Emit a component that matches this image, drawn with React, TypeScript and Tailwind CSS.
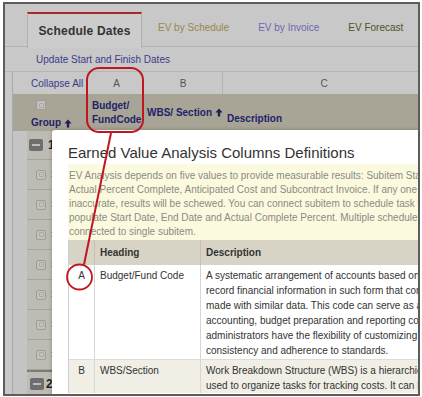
import React from 'react';

// Definitions modal over the (dimmed) schedule grid, with red call-out marks
const infoLines = [
  'EV Analysis depends on five values to provide measurable results: Subitem Start Date, End Date,',
  'Actual Percent Complete, Anticipated Cost and Subcontract Invoice. If any one of these is missing or',
  'inaccurate, results will be schewed. You can connect subitem to schedule task to automatically',
  'populate Start Date, End Date and Actual Complete Percent. Multiple schedule tasks can be',
  'connected to single subitem.',
];

const descA = [
  'A systematic arrangement of accounts based on a numbering system to',
  'record financial information in such form that comparisons can be',
  'made with similar data. This code can serve as a basis for cost',
  'accounting, budget preparation and reporting controls. Project',
  'administrators have the flexibility of customizing codes to ensure',
  'consistency and adherence to standards.',
];

const descB = [
  'Work Breakdown Structure (WBS) is a hierarchical decomposition',
  'used to organize tasks for tracking costs. It can be',
];

const UpArrow = () => (
  <svg width="8" height="9" viewBox="0 0 8 9" className="inline-block ml-[3px]">
    <path d="M4 0.5 L7.6 4.4 H5.2 V8.5 H2.8 V4.4 H0.4 Z" fill="#1f1f55" />
  </svg>
);

const CheckBox = () => (
  <div className="w-[10px] h-[10px] rounded-[2px] border border-[#9d9d98] bg-[#c2c1bb] flex items-center justify-center">
    <div className="w-[5px] h-[5px] rounded-[1px] border border-[#aaa9a3]" />
  </div>
);

const MinusBox = () => (
  <div className="w-[14px] h-[12px] rounded-[2px] bg-[#6e6e6e] flex items-center justify-center">
    <div className="w-[8px] h-[2px] bg-[#bdbdbd]" />
  </div>
);

const App: React.FC = () => {
  return (
    <div className="w-[422px] h-[397px] bg-white pt-[2px] pl-[3px] pr-[2px] pb-[1px] font-['Liberation_Sans',Arial,sans-serif]">
      <div className="relative h-full border-2 border-[#5d5d5d] bg-[#c8c8c8] overflow-hidden flex flex-col">
        {/* tabs */}
        <div className="flex h-[43px] shrink-0 border-b border-[#b2b2b2]">
          <div className="ml-[22px] mt-[8px] mb-[-1px] w-[115px] h-[36px] shrink-0 border-t-2 border-t-[#a8282c] border-x border-x-[#b0b0b0] bg-[#cccccc] flex items-center justify-center text-[12px] font-bold text-[#333] tracking-[0.2px]">
            Schedule Dates
          </div>
          <div className="ml-[16px] mt-[18px] text-[10px] leading-[12px] text-[#98864f] whitespace-nowrap">EV by Schedule</div>
          <div className="ml-[29px] mt-[18px] text-[10px] leading-[12px] text-[#6c68b4] whitespace-nowrap">EV by Invoice</div>
          <div className="ml-[29px] mt-[18px] text-[10px] leading-[12px] text-[#49562a] whitespace-nowrap">EV Forecast</div>
        </div>

        <div className="h-[25px] shrink-0 flex items-center pl-[31px] border-b border-[#b5b5b5] text-[10px] text-[#3b3b8a]">
          Update Start and Finish Dates
        </div>

        {/* grid */}
        <div className="ml-[7px] border-l border-[#a9a9a9] flex flex-col flex-1">
          <div className="h-[22px] shrink-0 flex text-[10px] text-[#555]">
            <div className="w-[76px] shrink-0 pl-[18px] flex items-center text-[#3a3a8a]">Collapse All</div>
            <div className="w-[55px] shrink-0 flex items-center justify-center">A</div>
            <div className="w-[79px] shrink-0 flex items-center justify-center border-r border-[#b3b3b3]">B</div>
            <div className="w-[202px] shrink-0 flex items-center justify-center">C</div>
          </div>

          <div className="h-[37px] shrink-0 flex bg-[#a8a597] text-[10px] font-bold text-[#22226a]">
            <div className="w-[76px] shrink-0 pl-[18px] flex flex-col justify-between pt-[6px] pb-[2px]">
              <div className="ml-[5px]"><CheckBox /></div>
              <div className="leading-[12px] flex items-center">Group<UpArrow /></div>
            </div>
            <div className="w-[55px] shrink-0 pl-[3px] flex flex-col justify-center leading-[14px]">
              <div>Budget/</div>
              <div>FundCode</div>
            </div>
            <div className="w-[79px] shrink-0 pl-[3px] flex items-center whitespace-nowrap">WBS/ Section<UpArrow /></div>
            <div className="flex-1 pl-[4px] flex items-end pb-[6px] leading-[12px]">Description</div>
          </div>

          <div className="flex flex-1">
            <div className="w-[14px] bg-[#c4c4c4] shrink-0" />
            <div className="flex-1 flex flex-col bg-[#bdbcb4]">
              <div className="h-[29px] shrink-0 flex items-center pl-[2px] border-b border-[#a6a59d]">
                <MinusBox />
                <span className="ml-[5px] text-[12px] font-bold text-[#222]">1</span>
              </div>
              {[0, 1, 2, 3, 4, 5, 6].map((i) => (
                <div key={i} className="h-[30px] shrink-0 flex items-center pl-[9px] border-b border-[#a6a59d]">
                  <CheckBox />
                  <span className="ml-[5px] text-[9px] font-bold text-[#444]">1.{i + 1}</span>
                </div>
              ))}
              <div className="h-[26px] shrink-0 flex items-center pl-[3px] border-t-2 border-[#7d7c76]">
                <MinusBox />
                <span className="ml-[2px] text-[12px] font-bold text-[#222]">2</span>
              </div>
            </div>
          </div>
        </div>

        {/* definitions modal */}
        <div className="absolute left-[47px] top-[126px] w-[420px] h-[300px] bg-white rounded-tl-[3px] pl-[16px] pt-[14px] shadow-[0_0_4px_rgba(0,0,0,0.25)]">
          <div className="text-[15px] leading-[18px] text-[#333] whitespace-nowrap">Earned Value Analysis Columns Definitions</div>
          <div className="mt-[2px] bg-[#fcfade] pl-[1px] pt-[5px] pb-[1px] text-[10px] leading-[14px] text-[#8a8a84]">
            {infoLines.map((l) => (
              <div key={l} className="whitespace-nowrap">{l}</div>
            ))}
          </div>
          <div className="border-l border-[#cfcfcf] text-[10px] text-[#333]">
            <div className="h-[25px] flex bg-[#d7d4c5] font-bold">
              <div className="w-[26px] shrink-0 border-r border-[#c4c1b3]" />
              <div className="w-[106px] shrink-0 pl-[5px] flex items-center border-r border-[#c4c1b3]">Heading</div>
              <div className="flex-1 pl-[5px] flex items-center">Description</div>
            </div>
            <div className="flex bg-white border-b border-[#dcdcdc] leading-[15px]">
              <div className="w-[26px] shrink-0 text-center pt-[3px] border-r border-[#d6d6d6]">A</div>
              <div className="w-[106px] shrink-0 pl-[5px] pt-[3px] border-r border-[#d6d6d6] whitespace-nowrap">Budget/Fund Code</div>
              <div className="flex-1 min-w-0 pl-[5px] pt-[3px] pb-[1px]">
                {descA.map((l) => (
                  <div key={l} className="whitespace-nowrap">{l}</div>
                ))}
              </div>
            </div>
            <div className="flex bg-[#f0eee5] leading-[15px]">
              <div className="w-[26px] shrink-0 text-center pt-[3px] border-r border-[#d6d6d6]">B</div>
              <div className="w-[106px] shrink-0 pl-[5px] pt-[3px] border-r border-[#d6d6d6]">WBS/Section</div>
              <div className="flex-1 min-w-0 pl-[5px] pt-[3px]">
                {descB.map((l) => (
                  <div key={l} className="whitespace-nowrap">{l}</div>
                ))}
              </div>
            </div>
          </div>
        </div>

        {/* red annotation marks */}
        <svg className="absolute left-[-5px] top-[-4px] pointer-events-none" width="422" height="397" viewBox="0 0 422 397">
          <rect x="87" y="68" width="56" height="64" rx="12" fill="none" stroke="#c0161f" strokeWidth="2" />
          <line x1="111" y1="133" x2="84" y2="264.5" stroke="#c0161f" strokeWidth="2" />
          <circle cx="79.5" cy="277" r="12.5" fill="none" stroke="#c0161f" strokeWidth="1.8" />
        </svg>
      </div>
    </div>
  );
};

export default App;
